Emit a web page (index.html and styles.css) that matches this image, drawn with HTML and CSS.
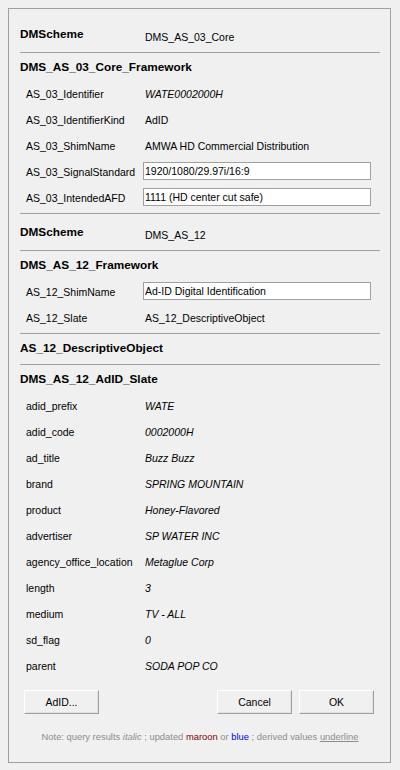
FILE: index.html
```html
<!DOCTYPE html>
<html>
<head>
<meta charset="utf-8">
<link rel="stylesheet" href="styles.css">
</head>
<body>
<div class="panel">
  <div class="scheme first"><span class="head col">DMScheme</span><span class="val low">DMS_AS_03_Core</span></div>
  <div class="sep"></div>
  <div class="group">
    <div class="ghead">DMS_AS_03_Core_Framework</div>
    <div class="field"><span class="lbl">AS_03_Identifier</span><span class="val it">WATE0002000H</span></div>
    <div class="field"><span class="lbl">AS_03_IdentifierKind</span><span class="val">AdID</span></div>
    <div class="field"><span class="lbl">AS_03_ShimName</span><span class="val">AMWA HD Commercial Distribution</span></div>
    <div class="field"><span class="lbl">AS_03_SignalStandard</span><span class="box">1920/1080/29.97i/16:9</span></div>
    <div class="field"><span class="lbl">AS_03_IntendedAFD</span><span class="box">1111 (HD center cut safe)</span></div>
  </div>
  <div class="sep"></div>
  <div class="scheme"><span class="head col">DMScheme</span><span class="val low">DMS_AS_12</span></div>
  <div class="sep"></div>
  <div class="group">
    <div class="ghead">DMS_AS_12_Framework</div>
    <div class="field"><span class="lbl">AS_12_ShimName</span><span class="box">Ad-ID Digital Identification</span></div>
    <div class="field"><span class="lbl">AS_12_Slate</span><span class="val">AS_12_DescriptiveObject</span></div>
  </div>
  <div class="sep"></div>
  <div class="group">
    <div class="ghead">AS_12_DescriptiveObject</div>
  </div>
  <div class="sep"></div>
  <div class="slate">
    <div class="ghead">DMS_AS_12_AdID_Slate</div>
    <div class="field"><span class="lbl">adid_prefix</span><span class="val it">WATE</span></div>
    <div class="field"><span class="lbl">adid_code</span><span class="val it">0002000H</span></div>
    <div class="field"><span class="lbl">ad_title</span><span class="val it">Buzz Buzz</span></div>
    <div class="field"><span class="lbl">brand</span><span class="val it">SPRING MOUNTAIN</span></div>
    <div class="field"><span class="lbl">product</span><span class="val it">Honey-Flavored</span></div>
    <div class="field"><span class="lbl">advertiser</span><span class="val it">SP WATER INC</span></div>
    <div class="field"><span class="lbl">agency_office_location</span><span class="val it">Metaglue Corp</span></div>
    <div class="field"><span class="lbl">length</span><span class="val it">3</span></div>
    <div class="field"><span class="lbl">medium</span><span class="val it">TV - ALL</span></div>
    <div class="field"><span class="lbl">sd_flag</span><span class="val it">0</span></div>
    <div class="field"><span class="lbl">parent</span><span class="val it">SODA POP CO</span></div>
  </div>
  <div class="buttons">
    <button class="btn">AdID...</button>
    <span class="spacer"></span>
    <button class="btn">Cancel</button>
    <button class="btn">OK</button>
  </div>
  <div class="note">Note: query results <i>italic</i> ; updated <span class="maroon">maroon</span> or <span class="blue">blue</span> ; derived values <u>underline</u></div>
</div>
</body>
</html>
```

FILE: styles.css
```css
html, body {
  margin: 0;
  padding: 0;
  background: #f0f0f0;
}
body {
  font-family: "Liberation Sans", Arial, sans-serif;
  font-size: 10.5px;
  color: #000;
}
.panel {
  box-sizing: border-box;
  margin: 8px;
  width: 383px;
  height: 755px;
  border: 1px solid #a0a0a0;
  padding: 7px 10px 0 11px;
}
.scheme {
  height: 36px;
  display: flex;
  align-items: center;
}
.first {
  height: 36px;
}
.head, .ghead {
  font-weight: bold;
  font-size: 11.8px;
}
.col {
  width: 123px;
  flex: none;
}
.val {
  padding-left: 2px;
  white-space: nowrap;
}
.low {
  padding-top: 5px;
}
.it {
  font-style: italic;
}
.sep {
  height: 1px;
  background: #a0a0a0;
}
.group {
  padding-bottom: 2px;
}
.ghead {
  height: 28px;
  line-height: 28px;
}
.field {
  height: 26px;
  display: flex;
  align-items: center;
}
.lbl {
  width: 117px;
  padding-left: 6px;
  flex: none;
  white-space: nowrap;
}
.box {
  box-sizing: border-box;
  width: 228px;
  height: 18px;
  line-height: 16px;
  border: 1px solid #a0a0a0;
  background: #fff;
  padding-left: 1px;
  margin-bottom: 2px;
  white-space: nowrap;
}
.buttons {
  display: flex;
  margin-top: 11px;
  padding: 0 6px 0 4px;
  gap: 7px;
}
.spacer {
  flex: 1;
}
.btn {
  box-sizing: border-box;
  width: 75px;
  height: 24px;
  margin: 0;
  padding: 0;
  font-family: "Liberation Sans", Arial, sans-serif;
  font-size: 10.5px;
  color: #000;
  background: #f0f0f0;
  border: 1px solid;
  border-color: #ffffff #a0a0a0 #a0a0a0 #ffffff;
  box-shadow: inset -1px -1px 0 #e3e3e3;
}
.note {
  margin-top: 16px;
  height: 14px;
  line-height: 14px;
  text-align: center;
  font-size: 9.4px;
  color: #8c8c8c;
}
.maroon { color: #800000; }
.blue { color: #0000ff; }
.note u { color: #8c8c8c; }
```
